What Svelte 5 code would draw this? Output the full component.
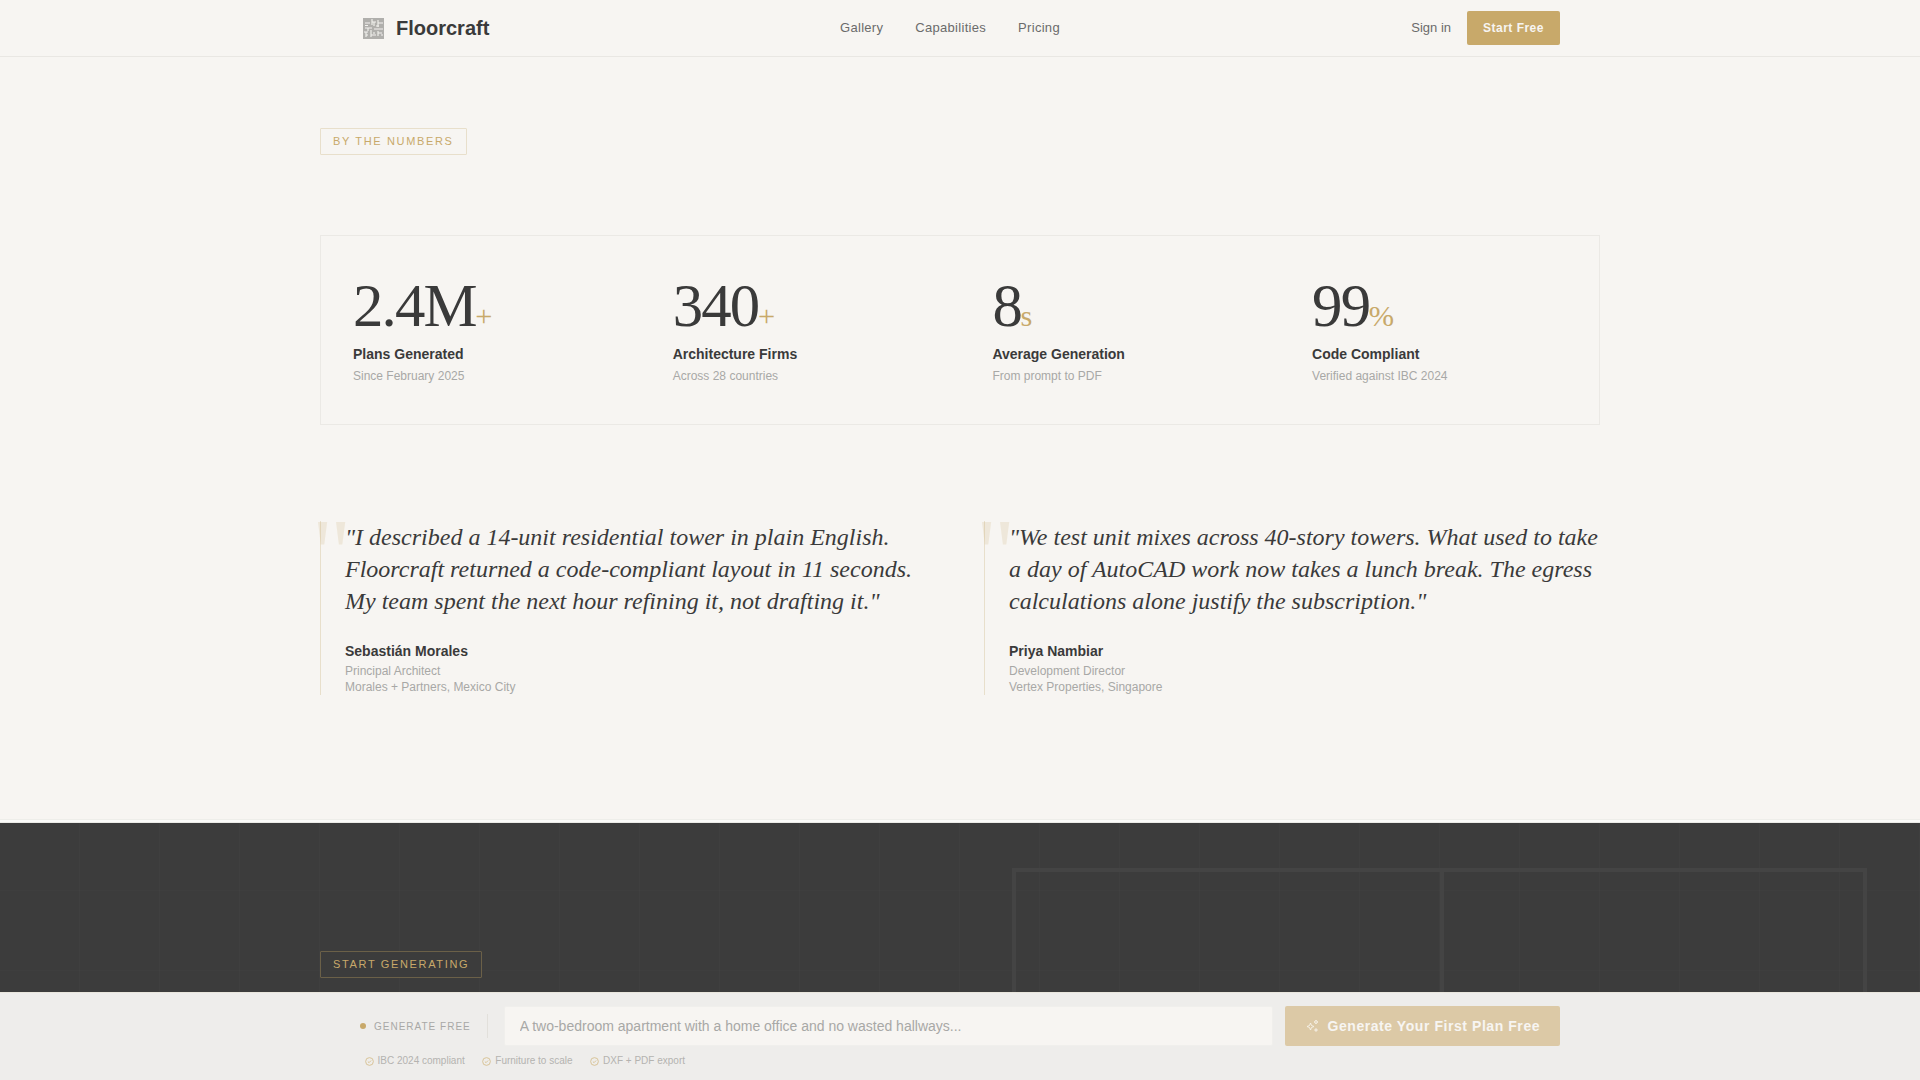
<script>
  const stats = [
    { v: '2.4M', u: '+', l: 'Plans Generated', s: 'Since February 2025' },
    { v: '340', u: '+', l: 'Architecture Firms', s: 'Across 28 countries' },
    { v: '8', u: 's', l: 'Average Generation', s: 'From prompt to PDF' },
    { v: '99', u: '%', l: 'Code Compliant', s: 'Verified against IBC 2024' }
  ];
  const quotes = [
    { t: '"I described a 14-unit residential tower in plain English. Floorcraft returned a code-compliant layout in 11 seconds. My team spent the next hour refining it, not drafting it."', n: 'Sebastián Morales', r: 'Principal Architect', c: 'Morales + Partners, Mexico City' },
    { t: '"We test unit mixes across 40-story towers. What used to take a day of AutoCAD work now takes a lunch break. The egress calculations alone justify the subscription."', n: 'Priya Nambiar', r: 'Development Director', c: 'Vertex Properties, Singapore' }
  ];
  const checks = ['IBC 2024 compliant', 'Furniture to scale', 'DXF + PDF export'];
</script>

<div class="page">
  <header class="nav">
    <div class="nav-in">
      <div class="brand">
        <svg class="logo" viewBox="0 0 21 21" width="21" height="21" aria-hidden="true">
          <rect width="21" height="21" fill="#b0afac" />
          <path d="M2 5h5M2 7.500h3M9 1v6M9 4h4M11 4v4M15 2v7M15 5h5M13 8h3M2 10h7M5 10v3M11 11h9M1 14h4M8 12v7M8 17h5M11 14v2M15 13v5M15 15h4M3 14v5M3 17h2M18 17h2" stroke="#f3f2ef" stroke-width="1.100" fill="none" />
        </svg>
        <span class="brand-name">Floorcraft</span>
      </div>
      <nav class="links">
        <a href="#g">Gallery</a>
        <a href="#c">Capabilities</a>
        <a href="#p">Pricing</a>
      </nav>
      <div class="actions">
        <a class="signin" href="#s">Sign in</a>
        <button class="start">Start Free</button>
      </div>
    </div>
  </header>

  <main class="numbers">
    <div class="badge">BY THE NUMBERS</div>
    <section class="stats">
      {#each stats as s}
        <div class="stat">
          <div class="value">{s.v}<span class="unit">{s.u}</span></div>
          <div class="label">{s.l}</div>
          <div class="sub">{s.s}</div>
        </div>
      {/each}
    </section>
    <section class="quotes">
      {#each quotes as q}
        <figure class="quote">
          <span class="mark" aria-hidden="true">"</span>
          <blockquote>{q.t}</blockquote>
          <figcaption>
            <div class="who">{q.n}</div>
            <div class="role">{q.r}</div>
            <div class="role">{q.c}</div>
          </figcaption>
        </figure>
      {/each}
    </section>
  </main>
  <div class="rule"></div>

  <section class="dark">
    <div class="plan" aria-hidden="true"><div class="room"></div><div class="room"></div></div>
    <div class="dark-in">
      <div class="badge dark-badge">START GENERATING</div>
    </div>
  </section>

  <aside class="bar">
    <div class="bar-in">
      <div class="bar-row">
        <div class="gen"><span class="dot"></span>GENERATE FREE</div>
        <span class="divider"></span>
        <input class="prompt" placeholder="A two-bedroom apartment with a home office and no wasted hallways..." />
        <button class="cta">
          <svg viewBox="0 0 14 14" width="14" height="14" aria-hidden="true">
            <path d="M5.500 4l1 2.500 2.500 1-2.500 1-1 2.500-1-2.500-2.500-1 2.500-1zM11 1l.6 1.400L13 3l-1.400.6L11 5l-.6-1.400L9 3l1.400-.6zM11 9.500l.4 1.100 1.100.4-1.100.4-.4 1.100-.4-1.100-1.100-.4 1.100-.4z" fill="none" stroke="#f7f3ea" stroke-width="0.900" />
          </svg>
          Generate Your First Plan Free
        </button>
      </div>
      <div class="checks">
        {#each checks as c}
          <span class="check">
            <svg viewBox="0 0 10 10" width="9" height="9" aria-hidden="true">
              <circle cx="5" cy="5" r="4.300" fill="none" stroke="#d6c08f" stroke-width="1" />
              <path d="M3.200 5.100l1.300 1.200 2.300-2.400" fill="none" stroke="#d6c08f" stroke-width="1" />
            </svg>
            {c}
          </span>
        {/each}
      </div>
    </div>
  </aside>
</div>

<style>
  :global(body) {
    margin: 0;
    background: #f7f5f2;
    overflow: hidden;
    font-family: "Liberation Sans", Arial, sans-serif;
  }
  .page { min-height: 1080px; background: #f7f5f2; }
  .nav { height: 56px; border-bottom: 1px solid #e9e7e3; }
  .nav-in {
    box-sizing: border-box;
    width: 1200px;
    height: 56px;
    margin: 0 auto;
    display: flex;
    align-items: center;
    justify-content: space-between;
    padding-left: 3px;
  }
  .brand { display: flex; align-items: center; gap: 12px; width: 477px; }
  .logo { display: block; }
  .brand-name { font-size: 20px; font-weight: 700; color: #3a3a3a; letter-spacing: 0; }
  .links { display: flex; gap: 32px; margin-right: auto; margin-bottom: 2px; }
  .links a, .signin {
    font-size: 13px;
    color: #6b6b6b;
    text-decoration: none;
    letter-spacing: 0.3px;
  }
  .signin { letter-spacing: 0; margin-bottom: 2px; }
  .actions { display: flex; align-items: center; gap: 16px; }
  .start {
    width: 93px;
    height: 34px;
    border: 0;
    border-radius: 2px;
    background: #c8a96a;
    color: #f7f5f2;
    font: 700 12px "Liberation Sans", Arial, sans-serif;
    letter-spacing: 0.48px;
    padding: 0;
  }
  .numbers { width: 1280px; margin: 0 auto; padding-top: 71px; height: 762px; box-sizing: border-box; }
  .badge {
    display: inline-block;
    box-sizing: border-box;
    height: 27px;
    line-height: 25px;
    padding: 0 12px;
    border: 1px solid #e8dfcb;
    border-radius: 1px;
    font-size: 11px;
    letter-spacing: 1.65px;
    color: #c8a96a;
    vertical-align: top;
  }
  .stats {
    display: grid;
    grid-template-columns: repeat(4, 255.7px);
    gap: 64px;
    margin-top: 80px;
    padding: 32px 30px 32px 32px;
    height: 190px;
    box-sizing: border-box;
    border: 1px solid #ebe9e5;
  }
  .value {
    font-family: "Liberation Serif", "Times New Roman", serif;
    font-size: 60.8px;
    line-height: 52px;
    letter-spacing: -1.82px;
    color: #3a3a3a;
    margin-top: 12px;
  }
  .unit { font-size: 30.4px; color: #c8a96a; letter-spacing: 0; margin-left: -0.5px; }
  .label { margin-top: 2px; font-size: 14px; font-weight: 700; color: #3a3a3a; line-height: 20px; }
  .sub { margin-top: 3px; font-size: 12px; color: #a8a8a6; line-height: 18px; }
  .quotes { display: grid; grid-template-columns: 1fr 1fr; gap: 48px; margin-top: 96px; }
  .quote {
    position: relative;
    margin: 0;
    padding: 0 0 0 24px;
    border-left: 1px solid #e8dfcb;
    height: 174px;
  }
  .mark {
    position: absolute;
    left: -9px;
    top: -16px;
    font-family: "Liberation Serif", serif;
    font-size: 96px;
    line-height: 96px;
    color: #c8a96a;
    opacity: 0.17;
  }
  blockquote {
    margin: 0;
    font-family: "Liberation Serif", "Times New Roman", serif;
    font-style: italic;
    font-size: 24px;
    line-height: 32px;
    color: #3a3a3a;
    position: relative;
  }
  figcaption { margin-top: 24px; }
  .who { font-size: 14px; font-weight: 700; color: #3a3a3a; line-height: 20px; margin-bottom: 2px; }
  .role { font-size: 12px; color: #a8a8a6; line-height: 16px; }
  .rule { height: 2px; background: #fbfbf9; border-top: 1px solid #eeeeea; border-bottom: 1px solid #ebebe7; }
  .dark {
    position: relative;
    height: 400px;
    background-color: #3c3c3c;
    background-image:
      linear-gradient(90deg, transparent 79px, rgba(255,255,255,0.014) 79px, rgba(255,255,255,0.014) 80px, transparent 80px),
      linear-gradient(180deg, transparent 79px, rgba(255,255,255,0.01) 79px, rgba(255,255,255,0.01) 80px, transparent 80px);
    background-size: 80px 80px;
    background-position: 0 -12px;
    overflow: hidden;
  }
  .dark-in { width: 1280px; margin: 0 auto; padding-top: 128px; position: relative; }
  .dark-badge { border-color: #6b6048; background: #3c3c3c; }
  .plan {
    position: absolute;
    left: 1012px;
    top: 45px;
    width: 855px;
    height: 400px;
    display: grid;
    grid-template-columns: 1fr 1fr;
    box-sizing: border-box;
    border: 4px solid #444444;
    border-bottom: 0;
    filter: blur(0.5px);
  }
  .room + .room { border-left: 4px solid #444444; }
  .bar {
    position: fixed;
    left: 0;
    right: 0;
    bottom: 0;
    height: 88px;
    background: #eeedeb;
    border-top: 1px solid #e9e6dd;
    box-sizing: border-box;
  }
  .bar-in { width: 1200px; margin: 0 auto; padding-top: 13px; }
  .bar-row { display: flex; align-items: center; height: 40px; }
  .gen {
    display: flex;
    align-items: center;
    gap: 8px;
    font-size: 10px;
    letter-spacing: 1px;
    color: #a8a8a6;
  }
  .dot { width: 6px; height: 6px; border-radius: 50%; background: #c8a96a; }
  .divider { width: 1px; height: 24px; background: #e2e0db; margin: 0 16px; }
  .prompt {
    flex: 1;
    min-width: 0;
    height: 40px;
    box-sizing: border-box;
    border: 1px solid #f0efec;
    border-radius: 2px;
    background: #f7f5f2;
    padding: 0 15px;
    font: 14px "Liberation Sans", Arial, sans-serif;
    color: #3a3a3a;
    outline: none;
  }
  .prompt::placeholder { color: #a8a8a6; opacity: 1; }
  .cta {
    display: flex;
    align-items: center;
    gap: 9px;
    height: 40px;
    width: 275px;
    margin-left: 12px;
    padding: 0 0 0 19.5px;
    border: 0;
    border-radius: 2px;
    background: #dcc9a6;
    color: #f7f5f2;
    font: 700 14px "Liberation Sans", Arial, sans-serif;
    letter-spacing: 0.56px;
  }
  .checks { display: flex; gap: 17.5px; margin-top: 7px; padding-left: 4.5px; }
  .check { display: flex; align-items: center; gap: 4px; font-size: 10px; color: #b4b3b0; line-height: 16px; }
</style>
